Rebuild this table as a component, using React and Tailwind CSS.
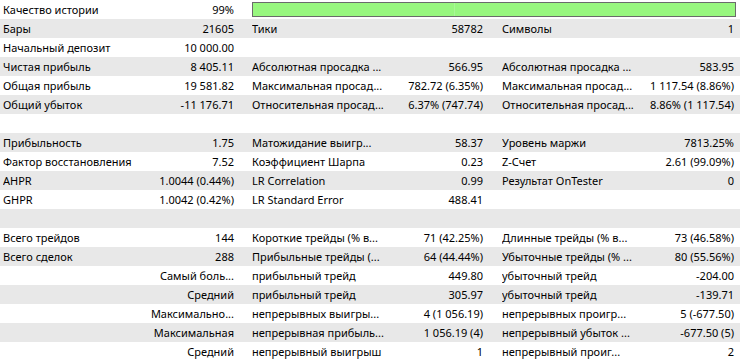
import React from "react";

const rows = [
  { a: ["Качество истории", "99%"], bar: true },
  { a: ["Бары", "21605"], b: ["Тики", "58782"], c: ["Символы", "1"] },
  { a: ["Начальный депозит", "10 000.00"] },
  { a: ["Чистая прибыль", "8 405.11"], b: ["Абсолютная просадка ...", "566.95"], c: ["Абсолютная просадка ...", "583.95"] },
  { a: ["Общая прибыль", "19 581.82"], b: ["Максимальная просад...", "782.72 (6.35%)"], c: ["Максимальная просад...", "1 117.54 (8.86%)"] },
  { a: ["Общий убыток", "-11 176.71"], b: ["Относительная просад...", "6.37% (747.74)"], c: ["Относительная просад...", "8.86% (1 117.54)"] },
  {},
  { a: ["Прибыльность", "1.75"], b: ["Матожидание выигр...", "58.37"], c: ["Уровень маржи", "7813.25%"] },
  { a: ["Фактор восстановления", "7.52"], b: ["Коэффициент Шарпа", "0.23"], c: ["Z-Счет", "2.61 (99.09%)"] },
  { a: ["AHPR", "1.0044 (0.44%)"], b: ["LR Correlation", "0.99"], c: ["Результат OnTester", "0"] },
  { a: ["GHPR", "1.0042 (0.42%)"], b: ["LR Standard Error", "488.41"] },
  {},
  { a: ["Всего трейдов", "144"], b: ["Короткие трейды (% в...", "71 (42.25%)"], c: ["Длинные трейды (% в...", "73 (46.58%)"] },
  { a: ["Всего сделок", "288"], b: ["Прибыльные трейды (...", "64 (44.44%)"], c: ["Убыточные трейды (% ...", "80 (55.56%)"] },
  { a: ["", "Самый боль..."], b: ["прибыльный трейд", "449.80"], c: ["убыточный трейд", "-204.00"] },
  { a: ["", "Средний"], b: ["прибыльный трейд", "305.97"], c: ["убыточный трейд", "-139.71"] },
  { a: ["", "Максимально..."], b: ["непрерывных выигры...", "4 (1 056.19)"], c: ["непрерывных проигр...", "5 (-677.50)"] },
  { a: ["", "Максимальная"], b: ["непрерывная прибыль...", "1 056.19 (4)"], c: ["непрерывный убыток ...", "-677.50 (5)"] },
  { a: ["", "Средний"], b: ["непрерывный выигрыш", "1"], c: ["непрерывный проиг...", "2"] },
];

function Cell({ d, w, pl, pr }) {
  return (
    <div className={`flex h-full items-center ${w} ${pl} ${pr}`}>
      <div className="min-w-0 flex-1 overflow-hidden whitespace-nowrap">{d ? d[0] : ""}</div>
      <div className="shrink-0 whitespace-nowrap pl-[4px] text-right">{d ? d[1] : ""}</div>
    </div>
  );
}

export default function App() {
  return (
    <div
      className="w-[740px] h-[362px] overflow-hidden bg-white text-[11px] text-black"
      style={{ fontFamily: '"Noto Sans", "Open Sans", sans-serif' }}
    >
      {rows.map((r, i) => (
        <div
          key={i}
          className={`flex h-[19px] leading-[19px] ${i % 2 === 1 ? "bg-[#e8e8e8]" : "bg-white"}`}
        >
          <Cell d={r.a} w="w-[247px]" pl="pl-[3px]" pr="pr-[13px]" />
          {r.bar ? (
            <div className="flex flex-1 items-start pl-[5px] pr-[4px] pt-[2px]">
              <div className="flex h-[15px] w-full border border-[#6b6b6b] bg-[#98f77f]">
                <div className="w-[201px]" />
                <div className="w-[1px] bg-[#a9f796]" />
                <div className="flex-1" />
              </div>
            </div>
          ) : (
            <>
              <Cell d={r.b} w="w-[250px]" pl="pl-[5px]" pr="pr-[14px]" />
              <Cell d={r.c} w="w-[243px]" pl="pl-[5px]" pr="pr-[6px]" />
            </>
          )}
        </div>
      ))}
    </div>
  );
}
